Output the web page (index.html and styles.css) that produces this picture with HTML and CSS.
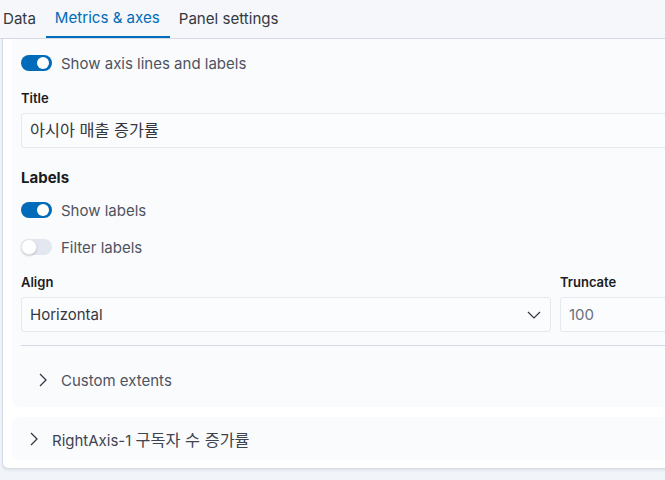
FILE: index.html
```html
<!DOCTYPE html>
<html lang="ko">
<head>
<meta charset="utf-8">
<link rel="stylesheet" href="styles.css">
</head>
<body>
<div class="tabs">
  <div class="tab tab-first">Data</div>
  <div class="tab tab-active">Metrics &amp; axes</div>
  <div class="tab">Panel settings</div>
</div>
<div class="card">
  <div class="panel panel-main">
    <div class="switch-row">
      <span class="switch on"><span class="knob"></span></span>
      <span class="switch-label">Show axis lines and labels</span>
    </div>
    <div class="field field-title">
      <div class="label">Title</div>
      <div class="input"><span class="ko">아시아 매출 증가률</span></div>
    </div>
    <div class="heading">Labels</div>
    <div class="switch-row row-show">
      <span class="switch on"><span class="knob"></span></span>
      <span class="switch-label">Show labels</span>
    </div>
    <div class="switch-row row-filter">
      <span class="switch off"><span class="knob"></span></span>
      <span class="switch-label">Filter labels</span>
    </div>
    <div class="field-pair">
      <div class="field field-align">
        <div class="label">Align</div>
        <div class="input select">
          <span>Horizontal</span>
          <svg class="chev-down" width="14" height="8" viewBox="0 0 14 8"><polyline points="1,1 7,7 13,1" fill="none" stroke="#343741" stroke-width="1.2"/></svg>
        </div>
      </div>
      <div class="field field-trunc">
        <div class="label">Truncate</div>
        <div class="input muted">100</div>
      </div>
    </div>
    <div class="rule"></div>
    <div class="accordion accordion-inner">
      <svg class="chev-right" width="8" height="14" viewBox="0 0 8 14"><polyline points="1,1 7,7 1,13" fill="none" stroke="#343741" stroke-width="1.3"/></svg>
      <span class="acc-label">Custom extents</span>
    </div>
  </div>
  <div class="panel panel-second">
    <div class="accordion accordion-outer">
      <svg class="chev-right" width="8" height="14" viewBox="0 0 8 14"><polyline points="1,1 7,7 1,13" fill="none" stroke="#343741" stroke-width="1.3"/></svg>
      <span class="acc-label dark">RightAxis-1 <span class="ko">구독자 수 증가률</span></span>
    </div>
  </div>
</div>
</body>
</html>
```

FILE: styles.css
```css
* { box-sizing: border-box; }
html, body {
  margin: 0;
  padding: 0;
}
body {
  width: 665px;
  height: 480px;
  overflow: hidden;
  background: #f1f4f9;
  font-family: Inter, "Noto Sans CJK KR", sans-serif;
  color: #343741;
}
.ko {
  font-size: 16.3px;
  letter-spacing: 0;
}
.tabs {
  display: flex;
  height: 39px;
  background: #f5f7fa;
  border-bottom: 1px solid #d3dae6;
}
.tab {
  height: 38px;
  padding: 0 10px 0 9px;
  font-size: 15.1px;
  line-height: 37px;
  color: #343741;
}
.tab-first { padding-left: 3px; }
.tab-active {
  color: #006bb8;
  border-bottom: 2px solid #006bb8;
  line-height: 35px;
  height: 38px;
}
.card {
  margin-left: 2px;
  width: 700px;
  height: 430px;
  background: #fff;
  border-left: 1px solid #d3dae6;
  border-bottom: 1px solid #d3dae6;
  border-radius: 0 0 0 6px;
  box-shadow: 0 2px 3px rgba(0, 0, 0, 0.06);
  padding: 0 0 8px 9px;
}
.panel {
  background: #fafbfd;
  border-radius: 0 0 0 6px;
  padding-left: 9px;
}
.panel-main {
  padding-top: 14px;
  padding-bottom: 17px;
  border-radius: 0 0 6px 6px;
}
.panel-second {
  margin-top: 10px;
  height: 43px;
  border-radius: 6px;
  padding-left: 0;
}
.switch-row {
  display: flex;
  align-items: center;
  height: 20px;
  gap: 9px;
}
.switch {
  position: relative;
  width: 31px;
  height: 16px;
  border-radius: 8px;
  flex: none;
}
.switch.on { background: #006bb8; }
.switch.off { background: #e3e8f0; }
.knob {
  position: absolute;
  top: 2px;
  width: 12px;
  height: 12px;
  border-radius: 50%;
  background: #fff;
}
.switch.on .knob { right: 3px; }
.switch.off .knob {
  left: 0;
  top: 0;
  width: 16px;
  height: 16px;
  border: 1px solid #e3e8f0;
  box-shadow: 0 1px 2px rgba(0, 0, 0, 0.18);
}
.switch-label {
  font-size: 15px;
  color: #4e535f;
}
.field-title { margin-top: 17px; }
.label {
  font-size: 13px;
  font-weight: 600;
  color: #1a1c21;
  line-height: 16px;
  margin-bottom: 7px;
}
.input {
  height: 35px;
  background: #fbfcfd;
  border: 1px solid #e4e8ef;
  border-radius: 3px 0 0 3px;
  padding: 0 8px;
  font-size: 15px;
  line-height: 33px;
  color: #343741;
}
.muted { color: #69707d; }
.heading {
  margin-top: 20px;
  font-size: 15px;
  font-weight: 700;
  line-height: 20px;
  color: #1a1c21;
}
.row-show { margin-top: 12px; }
.row-filter { margin-top: 17px; }
.field-pair {
  display: flex;
  gap: 9px;
  margin-top: 17px;
}
.field-align { flex: 0 0 530px; }
.field-trunc { flex: 1; }
.select {
  display: flex;
  align-items: center;
  justify-content: space-between;
  border-radius: 3px;
  padding-right: 9px;
}
.rule {
  margin-top: 13px;
  height: 1px;
  background: #d3dae6;
}
.accordion {
  display: flex;
  align-items: center;
  height: 43px;
  gap: 14px;
}
.accordion-inner {
  height: 20px;
  margin-top: 24px;
  padding-left: 18px;
}
.accordion-outer {
  padding-left: 18px;
}
.acc-label {
  font-size: 15px;
  color: #4e535f;
}
.acc-label.dark { color: #3f4450; }
```
